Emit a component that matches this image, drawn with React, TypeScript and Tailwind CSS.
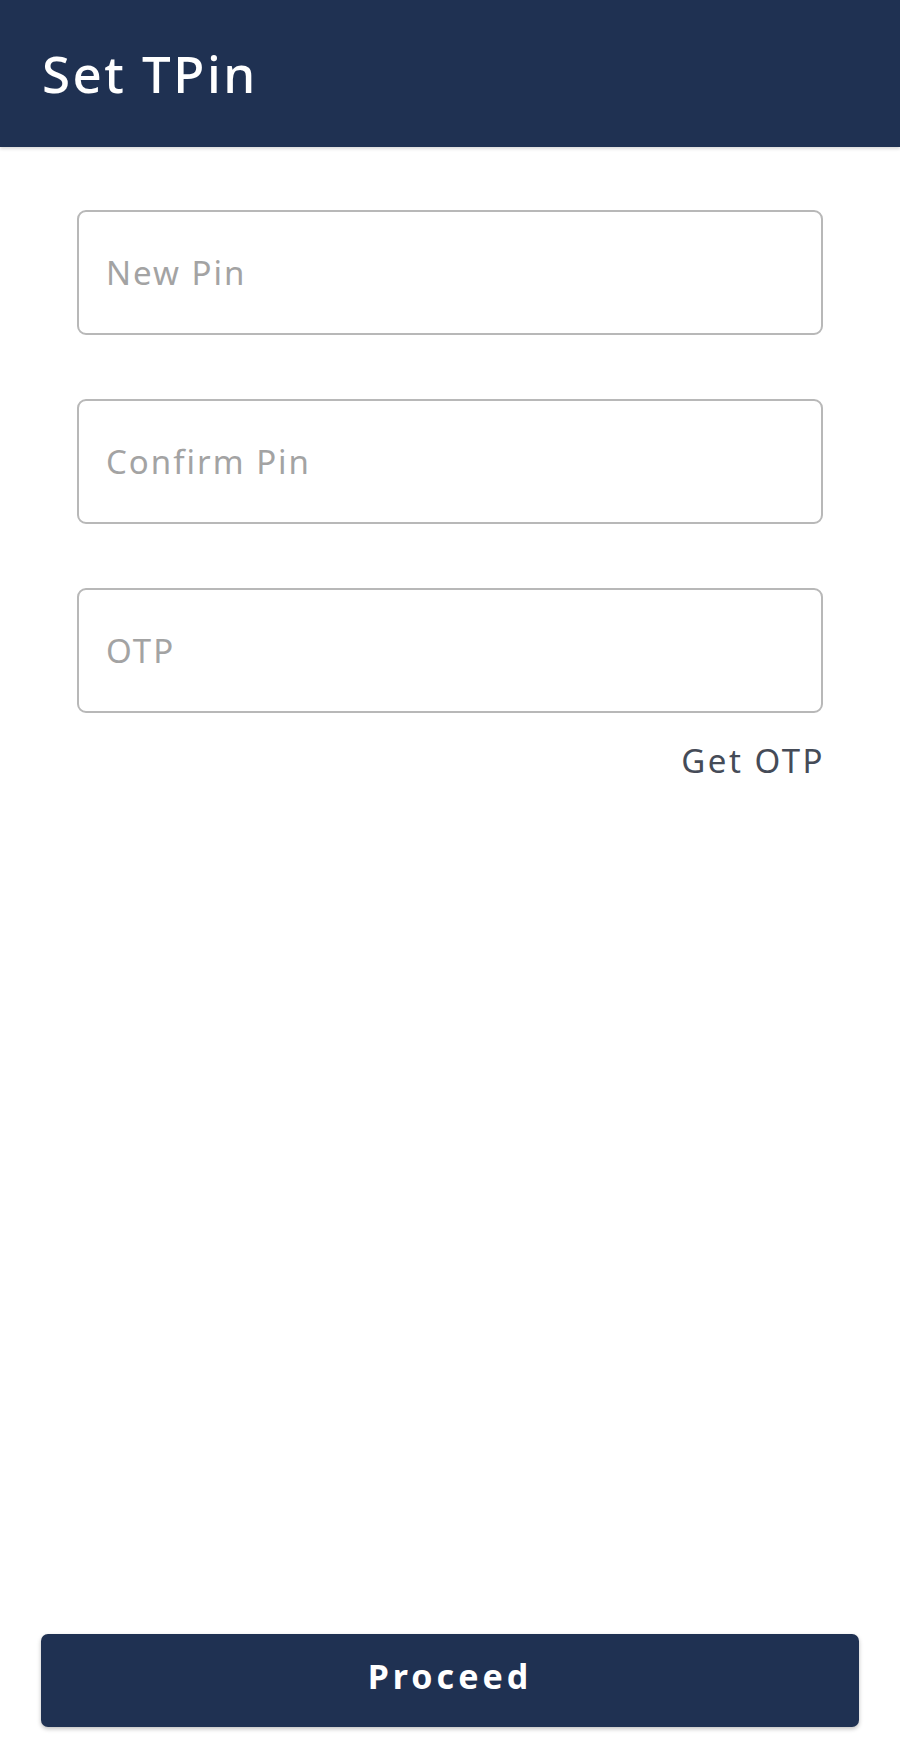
import React from "react";

const fields = ["New Pin", "Confirm Pin", "OTP"];

export default function App() {
  return (
    <div
      className="flex min-h-[1752px] w-[900px] flex-col bg-white"
      style={{ fontFamily: '"Noto Sans", "Open Sans", sans-serif' }}
    >
      {/* Top bar */}
      <header className="flex h-[147px] items-center bg-[#1f3152] px-[42px] shadow-[0_2px_3px_rgba(0,0,0,0.15)]">
        <h1 className="text-[51px] font-medium leading-none tracking-[2.5px] text-white">Set TPin</h1>
      </header>

      {/* Form */}
      <div className="flex flex-col gap-[64px] px-[77px] pt-[63px]">
        {fields.map((label) => (
          <input
            key={label}
            type="text"
            placeholder={label}
            className="h-[125px] w-full rounded-[9px] border-2 border-[#b8b8b8] bg-white px-[27px] text-[33px] tracking-[2px] text-[#333] outline-none placeholder:text-[#a3a3a3]"
          />
        ))}
      </div>
      <div className="flex justify-end px-[75px] pt-[24px]">
        <button type="button" className="text-[33px] leading-[48px] tracking-[2.5px] text-[#454b57]">
          Get OTP
        </button>
      </div>

      {/* Bottom action */}
      <div className="mt-auto px-[41px] pb-[25px]">
        <button
          type="button"
          className="h-[93px] w-full rounded-[7px] bg-[#1f3152] pb-[8px] text-[34px] font-bold tracking-[4px] text-white shadow-[0_2px_4px_rgba(0,0,0,0.25)]"
        >
          Proceed
        </button>
      </div>
    </div>
  );
}
